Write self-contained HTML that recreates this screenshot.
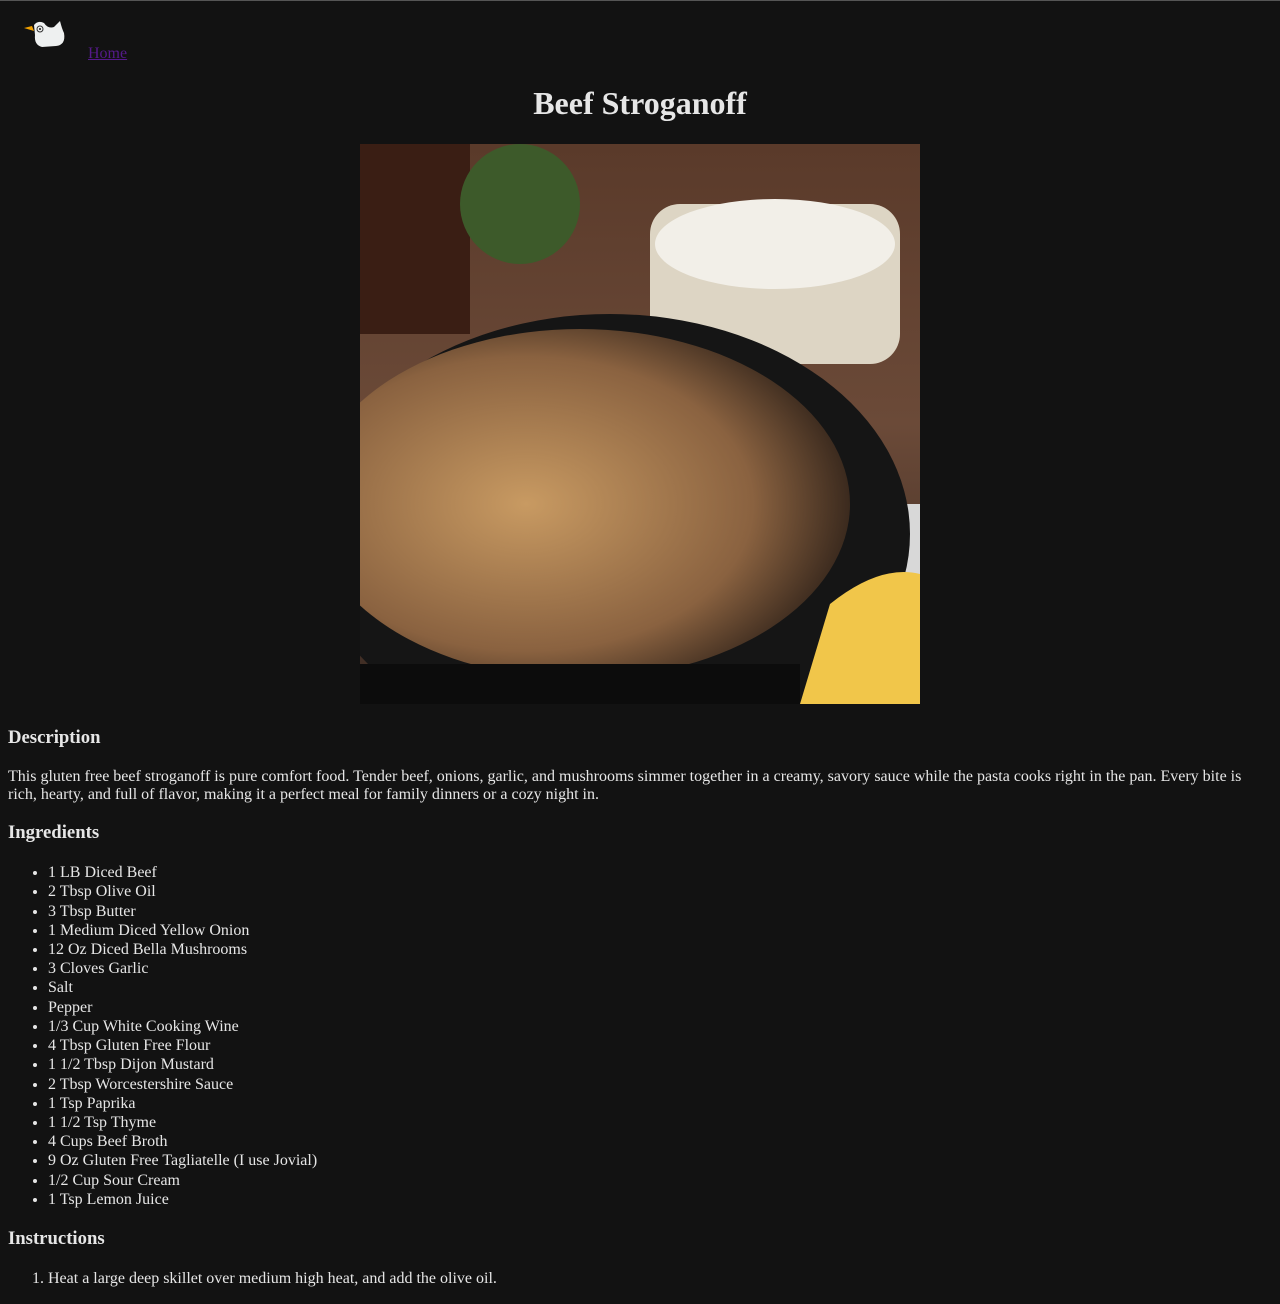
<!DOCTYPE html>
<html><head><meta charset="utf-8"><style>
html,body{margin:0;background:#121212;}
body{color:#e6e6e6;font-family:"Liberation Serif",serif;font-size:16px;border-top:1px solid #555;}
.wrap{padding:0 8px;}
header{position:relative;height:63px;}
header svg{position:absolute;left:14px;top:16px;}
header a{position:absolute;left:80px;top:44px;color:#551a8b;text-decoration:underline;}
h1{text-align:center;font-size:32px;margin:21.44px 0;}
.img{display:block;margin:0 auto 23px;width:560px;height:560px;}
h3{font-size:18.72px;margin:18.8px 0;}
p{margin:16px 0;line-height:18px;}
ul,ol{padding-left:40px;margin:16px 0;}
li{line-height:19.2px;}
</style></head><body><div class="wrap">
<header>
<svg width="46" height="32" viewBox="0 0 46 32"><path d="M2 11 L10 9 L12 14 Z" fill="#f0a000"/><path d="M12 8 Q16 3 22 6 Q26 12 32 10 Q36 6 38 4 Q40 12 42 16 Q44 28 34 29 L20 30 Q12 28 13 18 Z" fill="#eef0f0"/><circle cx="18" cy="12" r="3" fill="none" stroke="#333" stroke-width="1"/><circle cx="18" cy="12" r="1" fill="#111"/></svg>
<a href="#">Home</a>
</header>
<h1>Beef Stroganoff</h1>
<svg class="img" viewBox="0 0 560 560">
<defs><linearGradient id="bg" x1="0" y1="0" x2="0" y2="1"><stop offset="0" stop-color="#5a3a2a"/><stop offset="0.5" stop-color="#6b4a38"/><stop offset="1" stop-color="#3a2a22"/></linearGradient>
<radialGradient id="pa" cx="0.4" cy="0.5" r="0.6"><stop offset="0" stop-color="#c89a62"/><stop offset="0.7" stop-color="#8a6240"/><stop offset="1" stop-color="#3b2a1e"/></radialGradient></defs>
<rect width="560" height="560" fill="url(#bg)"/>
<rect x="0" y="0" width="110" height="190" fill="#3a1e14"/>
<ellipse cx="160" cy="60" rx="60" ry="60" fill="#3d5a2a"/>
<rect x="290" y="60" width="250" height="160" rx="30" fill="#ddd5c4"/>
<ellipse cx="415" cy="100" rx="120" ry="45" fill="#f2efe8"/>
<rect x="440" y="360" width="120" height="200" fill="#d8d8d8"/>
<ellipse cx="250" cy="390" rx="300" ry="220" fill="#151515"/>
<ellipse cx="220" cy="360" rx="270" ry="175" fill="url(#pa)"/>
<path d="M470 460 Q520 420 560 430 L560 560 L440 560 Z" fill="#f1c64a"/>
<rect x="0" y="520" width="440" height="40" fill="#0c0c0c"/>
</svg>
<h3>Description</h3>
<p>This gluten free beef stroganoff is pure comfort food. Tender beef, onions, garlic, and mushrooms simmer together in a creamy, savory sauce while the pasta cooks right in the pan. Every bite is rich, hearty, and full of flavor, making it a perfect meal for family dinners or a cozy night in.</p>
<h3>Ingredients</h3>
<ul>
<li>1 LB Diced Beef</li><li>2 Tbsp Olive Oil</li><li>3 Tbsp Butter</li><li>1 Medium Diced Yellow Onion</li><li>12 Oz Diced Bella Mushrooms</li><li>3 Cloves Garlic</li><li>Salt</li><li>Pepper</li><li>1/3 Cup White Cooking Wine</li><li>4 Tbsp Gluten Free Flour</li><li>1 1/2 Tbsp Dijon Mustard</li><li>2 Tbsp Worcestershire Sauce</li><li>1 Tsp Paprika</li><li>1 1/2 Tsp Thyme</li><li>4 Cups Beef Broth</li><li>9 Oz Gluten Free Tagliatelle (I use Jovial)</li><li>1/2 Cup Sour Cream</li><li>1 Tsp Lemon Juice</li>
</ul>
<h3>Instructions</h3>
<ol><li>Heat a large deep skillet over medium high heat, and add the olive oil.</li></ol>
</div></body></html>
